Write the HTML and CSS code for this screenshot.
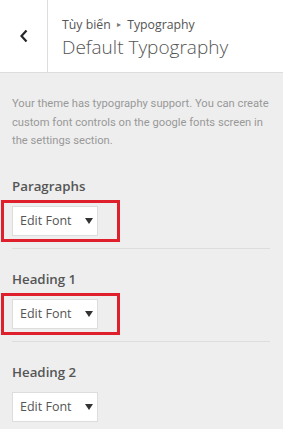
FILE: index.html
```html
<!DOCTYPE html>
<html lang="vi">
<head>
  <meta charset="UTF-8">
  <meta name="viewport" content="width=device-width, initial-scale=1.0">
  <title>Default Typography</title>
  <link rel="stylesheet" href="styles.css">
</head>
<body>

  <!-- Шапка панели -->
  <div class="panel-header">
    <button class="back-btn" aria-label="Back">
      <svg viewBox="0 0 10 14" width="10" height="14">
        <path d="M7.5 1.5 L2.5 7 L7.5 12.5" fill="none" stroke="#23282d" stroke-width="2.2"/>
      </svg>
    </button>
    <div class="panel-title">
      <span class="crumbs">Tùy biến <span class="sep">&#9656;</span> Typography</span>
      <h1>Default Typography</h1>
    </div>
  </div>

  <div class="panel-body">
    <p class="description">Your theme has typography support. You can create custom font controls on the google fonts screen in the settings section.</p>

    <div class="control">
      <div class="control-title">Paragraphs</div>
      <div class="btn-wrap highlight">
        <button class="font-btn">Edit Font
          <svg class="caret" viewBox="0 0 8 6" width="8" height="6"><path d="M0 0 H8 L4 6 Z" fill="#333"/></svg>
        </button>
      </div>
    </div>

    <div class="control">
      <div class="control-title">Heading 1</div>
      <div class="btn-wrap highlight">
        <button class="font-btn">Edit Font
          <svg class="caret" viewBox="0 0 8 6" width="8" height="6"><path d="M0 0 H8 L4 6 Z" fill="#333"/></svg>
        </button>
      </div>
    </div>

    <div class="control">
      <div class="control-title">Heading 2</div>
      <div class="btn-wrap">
        <button class="font-btn">Edit Font
          <svg class="caret" viewBox="0 0 8 6" width="8" height="6"><path d="M0 0 H8 L4 6 Z" fill="#333"/></svg>
        </button>
      </div>
    </div>
  </div>

</body>
</html>
```

FILE: styles.css
```css
body {
  margin: 0;
  padding: 0;
  background-color: #eeeeee;
  font-family: "Open Sans", "Noto Sans", sans-serif;
  color: #555;
  overflow: hidden;
}

/* Шапка */
.panel-header {
  display: flex;
  height: 72px;
  background-color: #fff;
  border-bottom: 1px solid #dddddd;
}

.back-btn {
  width: 48px;
  padding: 0;
  border: none;
  border-right: 1px solid #dddddd;
  background: #fff;
  display: flex;
  justify-content: center;
  align-items: center;
}

.panel-title {
  display: flex;
  flex-direction: column;
  justify-content: center;
  padding-left: 14px;
  padding-top: 2px;
}

.crumbs {
  font-size: 12.3px;
  line-height: 18px;
  color: #555;
}

.crumbs .sep {
  font-size: 8px;
  vertical-align: 2px;
  margin: 0 3px;
  color: #777;
}

.panel-title h1 {
  margin: 0;
  font-size: 19px;
  font-weight: 300;
  line-height: 26px;
  color: #555;
}

/* Содержимое */
.panel-body {
  padding: 0 13px 0 12px;
}

.description {
  margin: 22px 0 5px;
  font-family: Roboto, "Open Sans", sans-serif;
  font-size: 11.2px;
  line-height: 18.6px;
  color: #999;
}

.control {
  padding: 20px 0 12px;
  border-bottom: 1px solid #dddddd;
}

.control-title {
  font-size: 13.3px;
  font-weight: 600;
  line-height: 20px;
  color: #555;
  margin-bottom: 10px;
}

.btn-wrap {
  position: relative;
  display: inline-block;
  vertical-align: top;
}

/* Красная рамка-пометка вокруг кнопки */
.highlight::after {
  content: "";
  position: absolute;
  left: -11px;
  right: -22px;
  top: -6px;
  bottom: -6px;
  border: 3px solid #e01f2d;
}

.font-btn {
  display: flex;
  align-items: center;
  height: 30px;
  width: 86px;
  padding: 0 0 0 7px;
  background-color: #fff;
  border: 1px solid #dddddd;
  font-family: inherit;
  font-size: 12.5px;
  color: #555;
}

.caret {
  margin-left: 13px;
  margin-top: 1px;
}
```
